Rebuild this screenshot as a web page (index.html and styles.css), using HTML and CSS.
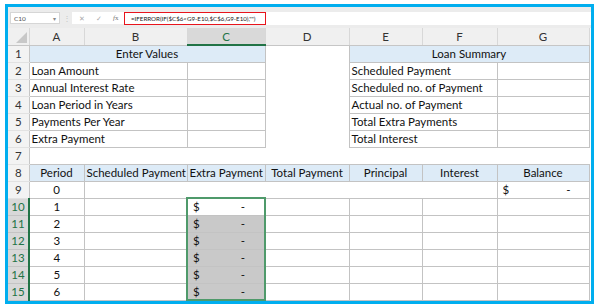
FILE: index.html
```html
<!doctype html>
<html lang="en">
<head>
    <meta charset="UTF-8">
    <title>Loan Schedule</title>
    <link rel="stylesheet" href="styles.css">
</head>
<body>
<div class="frame">
    <div class="fbar">
        <div class="namebox">C10<span class="caret">&#9662;</span></div>
        <div class="dots">&#8942;</div>
        <div class="btns">
            <span class="x">&#10005;</span>
            <span class="ok">&#10003;</span>
            <span class="fx"><i>f</i>x</span>
        </div>
        <div class="finput">
            <div class="formula">=IFERROR(IF($C$6&lt;G9-E10,$C$6,G9-E10),"")</div>
        </div>
    </div>
    <table class="sheet">
        <colgroup>
            <col style="width:21px">
            <col style="width:55px">
            <col style="width:103px">
            <col style="width:78px">
            <col style="width:84px">
            <col style="width:73px">
            <col style="width:75px">
            <col style="width:92px">
        </colgroup>
        <tr class="colhead">
            <th class="corner"><span class="tri"></span></th>
            <th>A</th><th>B</th><th class="on">C</th><th>D</th><th>E</th><th>F</th><th>G</th>
        </tr>
        <tr>
            <td class="rh">1</td>
            <td class="b blue c" colspan="3">Enter Values</td>
            <td></td>
            <td class="b blue c" colspan="3">Loan Summary</td>
        </tr>
        <tr>
            <td class="rh">2</td>
            <td class="b" colspan="2">Loan Amount</td><td class="b"></td>
            <td></td>
            <td class="b" colspan="2">Scheduled Payment</td><td class="b"></td>
        </tr>
        <tr>
            <td class="rh">3</td>
            <td class="b" colspan="2">Annual Interest Rate</td><td class="b"></td>
            <td></td>
            <td class="b" colspan="2">Scheduled no. of Payment</td><td class="b"></td>
        </tr>
        <tr>
            <td class="rh">4</td>
            <td class="b" colspan="2">Loan Period in Years</td><td class="b"></td>
            <td></td>
            <td class="b" colspan="2">Actual no. of Payment</td><td class="b"></td>
        </tr>
        <tr>
            <td class="rh">5</td>
            <td class="b" colspan="2">Payments Per Year</td><td class="b"></td>
            <td></td>
            <td class="b" colspan="2">Total Extra Payments</td><td class="b"></td>
        </tr>
        <tr>
            <td class="rh">6</td>
            <td class="b" colspan="2">Extra Payment</td><td class="b"></td>
            <td></td>
            <td class="b" colspan="2">Total Interest</td><td class="b"></td>
        </tr>
        <tr>
            <td class="rh">7</td>
            <td colspan="7"></td>
        </tr>
        <tr>
            <td class="rh">8</td>
            <td class="b blue c">Period</td>
            <td class="b blue c">Scheduled Payment</td>
            <td class="b blue c">Extra Payment</td>
            <td class="b blue c">Total Payment</td>
            <td class="b blue c">Principal</td>
            <td class="b blue c">Interest</td>
            <td class="b blue c">Balance</td>
        </tr>
        <tr>
            <td class="rh">9</td>
            <td class="b c">0</td>
            <td class="b" colspan="5"></td>
            <td class="b"><div class="acct wide"><span>$</span><span>-</span></div></td>
        </tr>
        <tr>
            <td class="rh hi">10</td>
            <td class="b c">1</td><td class="b"></td>
            <td class="b sel top"><div class="acct"><span>$</span><span>-</span></div></td>
            <td class="b"></td><td class="b"></td><td class="b"></td><td class="b"></td>
        </tr>
        <tr>
            <td class="rh hi">11</td>
            <td class="b c">2</td><td class="b"></td>
            <td class="b sel shade"><div class="acct"><span>$</span><span>-</span></div></td>
            <td class="b"></td><td class="b"></td><td class="b"></td><td class="b"></td>
        </tr>
        <tr>
            <td class="rh hi">12</td>
            <td class="b c">3</td><td class="b"></td>
            <td class="b sel shade"><div class="acct"><span>$</span><span>-</span></div></td>
            <td class="b"></td><td class="b"></td><td class="b"></td><td class="b"></td>
        </tr>
        <tr>
            <td class="rh hi">13</td>
            <td class="b c">4</td><td class="b"></td>
            <td class="b sel shade"><div class="acct"><span>$</span><span>-</span></div></td>
            <td class="b"></td><td class="b"></td><td class="b"></td><td class="b"></td>
        </tr>
        <tr>
            <td class="rh hi">14</td>
            <td class="b c">5</td><td class="b"></td>
            <td class="b sel shade"><div class="acct"><span>$</span><span>-</span></div></td>
            <td class="b"></td><td class="b"></td><td class="b"></td><td class="b"></td>
        </tr>
        <tr>
            <td class="rh hi">15</td>
            <td class="b c">6</td><td class="b"></td>
            <td class="b sel shade bottom"><div class="acct"><span>$</span><span>-</span></div></td>
            <td class="b"></td><td class="b"></td><td class="b"></td><td class="b"></td>
        </tr>
    </table>
</div>
</body>
</html>
```

FILE: styles.css
```css
html, body {
    margin: 0;
    padding: 0;
    background: #fff;
}

.frame {
    margin: 4px 0 0 5px;
    width: 583px;
    height: 294px;
    border: 3px solid #00aeef;
    background: #fff;
    overflow: hidden;
    font-family: "Lato", "Liberation Sans", sans-serif;
    color: #111;
}

.fbar {
    height: 21px;
    background: #ececec;
    display: flex;
    align-items: center;
    box-sizing: border-box;
    padding: 1px 0 0 2px;
}

.namebox {
    width: 42px;
    height: 10px;
    background: #fff;
    border: 1px solid #d6d6d6;
    font-size: 6.5px;
    color: #555;
    display: flex;
    align-items: center;
    justify-content: space-between;
    padding: 0 3px;
    box-sizing: content-box;
}

.caret {
    font-size: 6px;
    color: #888;
}

.dots {
    width: 10px;
    text-align: center;
    font-size: 8px;
    color: #c4c4c4;
    margin-left: 2px;
}

.btns {
    width: 50px;
    height: 12px;
    background: #fff;
    display: flex;
    align-items: center;
    justify-content: space-around;
    font-size: 7px;
    color: #aaa;
    padding-left: 2px;
}

.fx {
    font-family: "Liberation Serif", serif;
    color: #777;
}

.finput {
    flex: 1;
    height: 13px;
    background: #fff;
    display: flex;
    align-items: center;
}

.formula {
    width: 134px;
    height: 11px;
    border: 1.5px solid #e8141c;
    font-size: 6.2px;
    color: #222;
    line-height: 11px;
    padding-left: 6px;
    white-space: nowrap;
}

.sheet {
    border-collapse: collapse;
    table-layout: fixed;
    width: 581px;
    font-size: 11.5px;
}

.sheet tr {
    height: 17px;
}

.sheet th,
.sheet td {
    padding: 0 2px;
    line-height: 13px;
    white-space: nowrap;
    overflow: hidden;
}

.colhead th {
    background: #f0f0f0;
    font-weight: normal;
    color: #333;
    border-right: 1px solid #d8d8d8;
    border-bottom: 1px solid #c6c6c6;
}

.colhead th.on {
    background: #d9d9d9;
    color: #217346;
    border-bottom: 2px solid #217346;
}

.corner {
    position: relative;
}

.tri {
    position: absolute;
    right: 2px;
    bottom: 2px;
    width: 0;
    height: 0;
    border-left: 11px solid transparent;
    border-bottom: 11px solid #c8c8c8;
}

.rh {
    background: #f3f3f3;
    text-align: center;
    color: #333;
    border-right: 1px solid #c6c6c6;
    border-bottom: 1px solid #e2e2e2;
}

.rh.hi {
    background: #d8d8d8;
    color: #217346;
    border-right: 2px solid #217346;
    border-bottom: 1px solid #c4c4c4;
}

.b {
    border: 1px solid #c3c3c3;
}

.c {
    text-align: center;
}

.blue {
    background: #ddebf7;
}

.sel {
    border-left: 2px solid #4f9a6b;
    border-right: 2px solid #4f9a6b;
}

.sel.top {
    border-top: 2px solid #4f9a6b;
}

.sel.bottom {
    border-bottom: 2px solid #4f9a6b;
}

.shade {
    background: #c9c9c9;
}

.acct {
    display: flex;
    justify-content: space-between;
    padding: 0 17px 0 3px;
}

.acct.wide {
    padding-right: 16px;
}
```
